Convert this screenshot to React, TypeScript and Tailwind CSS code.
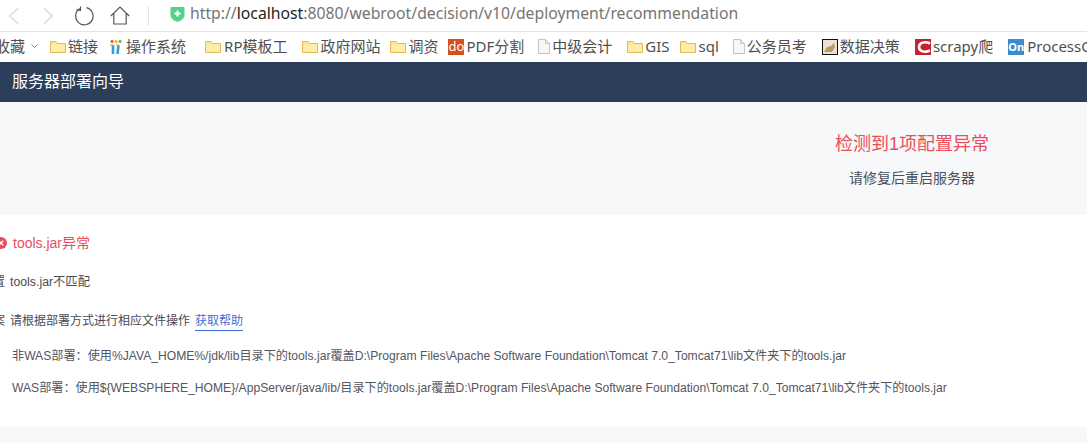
const yahei = '"Noto Sans","Noto Sans CJK SC",sans-serif';
const page = '"Liberation Sans","Noto Sans CJK SC",sans-serif';

function Folder() {
  return (
    <svg width="16" height="14" viewBox="0 0 16 14" className="shrink-0">
      <path d="M0.5 12.5V1.5h5.5l1.5 2h8v9z" fill="#fce693" stroke="#e3bc55" />
      <path d="M1.5 4.5h13v7h-13z" fill="#feeea9" />
    </svg>
  );
}

function FileIcon() {
  return (
    <svg width="14" height="15" viewBox="0 0 14 15" className="shrink-0">
      <path d="M1.5 0.5h7l4 4v10h-11z" fill="#f7f7f7" stroke="#c4c4c4" />
      <path d="M8.5 0.5v4h4" fill="none" stroke="#c4c4c4" />
    </svg>
  );
}

function Tri() {
  return (
    <svg width="14" height="16" viewBox="0 0 14 16" className="shrink-0">
      <path d="M3 1c-2 0-2 3 0 3s2-3 0-3z" fill="#e0483d" />
      <path d="M7 1c-2 0-2 3 0 3s2-3 0-3z" fill="#f5a623" />
      <path d="M11 1c-2 0-2 3 0 3s2-3 0-3z" fill="#4caf50" />
      <path d="M4 6v9M9.500 6l-1 9" stroke="#2f9fd8" strokeWidth="2.600" fill="none" />
      <path d="M1 6h3M7 6h3" stroke="#f0b33a" strokeWidth="1.500" />
    </svg>
  );
}

function Mark({ label, bg, size }: { label: string; bg: string; size: string }) {
  return <span className={`shrink-0 w-4 h-4 flex items-center justify-center leading-none text-white overflow-hidden ${size} ${bg}`}>{label}</span>;
}

function Item({ icon, text, ml, gap }: { icon: React.ReactNode; text: string; ml: string; gap: string }) {
  return (
    <div className={`flex items-center shrink-0 ${ml} ${gap}`}>
      {icon}
      <span className="whitespace-nowrap">{text}</span>
    </div>
  );
}

export default function App() {
  return (
    <div className="w-[1087px] h-[443px] overflow-hidden bg-white flex flex-col" style={{ fontFamily: page }}>
      <div className="h-[32px] shrink-0 bg-white border-b border-[#e3e3e3] flex items-center">
        <svg width="13" height="18" viewBox="0 0 13 18" className="ml-[7px]" fill="none" stroke="#d6d6d6" strokeWidth="1.300">
          <path d="M11 1.500L2.500 9l8.500 7.500" />
        </svg>
        <svg width="13" height="18" viewBox="0 0 13 18" className="ml-[22px]" fill="none" stroke="#d6d6d6" strokeWidth="1.300">
          <path d="M2 1.500L10.500 9 2 16.500" />
        </svg>
        <svg width="20" height="20" viewBox="0 0 20 20" className="ml-[19px]" fill="none" stroke="#555" strokeWidth="1.200">
          <path d="M6 2.600A8.700 8.700 0 1 0 12.500 1.700" />
          <path d="M6.500 0.500L6.500 4.500 2.500 3.500" />
        </svg>
        <svg width="20" height="19" viewBox="0 0 20 19" className="ml-[16px]" fill="none" stroke="#555" strokeWidth="1.200">
          <path d="M0.800 10L10 1l9.200 9M3.800 8v10h12.400V8" />
        </svg>
        <div className="ml-[18px] w-px h-[20px] bg-[#e4e4e4]" />
        <svg width="15" height="16" viewBox="0 0 15 16" className="ml-[21px] -mt-[4px]">
          <path d="M1 1.500h13v8c0 3-3.500 5-6.500 6-3-1-6.500-3-6.500-6z" fill="#55d28a" stroke="#55d28a" strokeLinejoin="round" />
          <path d="M7.500 4.500v6M4.500 7.500h6" stroke="#fff" strokeWidth="2" />
        </svg>
        <div className="ml-[5px] text-[15.750px] text-[#757575] whitespace-nowrap -mt-[3px]" style={{ fontFamily: yahei }}>
          http://<span className="text-[#222]">localhost</span>:8080/webroot/decision/v10/deployment/recommendation
        </div>
      </div>
      <div className="h-[30px] shrink-0 bg-white flex items-center pb-[1px] text-[15px] text-[#505050] overflow-hidden" style={{ fontFamily: yahei }}>
        <span className="-ml-[5px] whitespace-nowrap">收藏</span>
        <svg width="7" height="5" viewBox="0 0 7 5" className="ml-[6px] shrink-0" fill="none" stroke="#888">
          <path d="M0.500 0.500L3.500 3.500 6.500 0.500" />
        </svg>
        <Item icon={<Folder />} text="链接" ml="ml-[12px]" gap="gap-[2px]" />
        <Item icon={<Tri />} text="操作系统" ml="ml-[11px]" gap="gap-[3px]" />
        <Item icon={<Folder />} text="RP模板工" ml="ml-[19px]" gap="gap-[3px]" />
        <Item icon={<Folder />} text="政府网站" ml="ml-[15px]" gap="gap-[2px]" />
        <Item icon={<Folder />} text="调资" ml="ml-[10px]" gap="gap-[2px]" />
        <Item icon={<Mark label="do" bg="bg-[#d6501c]" size="text-[13px]" />} text="PDF分割" ml="ml-[10px]" gap="gap-[2px]" />
        <Item icon={<FileIcon />} text="中级会计" ml="ml-[13px]" gap="gap-[1px]" />
        <Item icon={<Folder />} text="GIS" ml="ml-[15px]" gap="gap-[2px]" />
        <Item icon={<Folder />} text="sql" ml="ml-[10px]" gap="gap-[3px]" />
        <Item icon={<FileIcon />} text="公务员考" ml="ml-[13px]" gap="gap-[1px]" />
        <Item
          icon={
            <svg width="16" height="16" viewBox="0 0 16 16" className="shrink-0">
              <rect x="0.500" y="0.500" width="15" height="15" fill="#e9e3d3" stroke="#111" />
              <path d="M2 13l3-5 4-1 3-3 1 4-3 5z" fill="#b89a5e" />
            </svg>
          }
          text="数据决策"
          ml="ml-[15px]"
          gap="gap-[2px]"
        />
        <Item
          icon={
            <svg width="16" height="16" viewBox="0 0 16 16" className="shrink-0">
              <rect width="16" height="16" fill="#c8202f" />
              <path d="M15 4.500C10 2 4 3.500 4 8s6 6 11 3.500" fill="none" stroke="#fff" strokeWidth="2.600" />
            </svg>
          }
          text="scrapy爬"
          ml="ml-[15px]"
          gap="gap-[2px]"
        />
        <Item icon={<Mark label="On" bg="bg-[#3b8bd0]" size="text-[11px] font-bold" />} text="ProcessOn" ml="ml-[15px]" gap="gap-[3px]" />
      </div>
      <div className="h-[40px] shrink-0 bg-[#2c3e5a] flex items-center pl-[12px] text-[16px] text-white">服务器部署向导</div>
      <div className="h-[113px] shrink-0 bg-[#f7f8fa] flex flex-col items-center w-[1824px] pt-[29px]">
        <div className="text-[18px] leading-[26px] text-[#eb4d5c]">检测到1项配置异常</div>
        <div className="mt-[11px] text-[14px] leading-[20px] text-[#4a5060]">请修复后重启服务器</div>
      </div>
      <div className="h-[212px] shrink-0 bg-white pt-[20px] flex flex-col">
        <div className="flex items-center h-[16px] text-[14px] text-[#eb4d5c]">
          <svg width="12" height="12" viewBox="0 0 12 12" className="-ml-[5px] mr-[6px] -mt-[1px] shrink-0">
            <circle cx="6" cy="6" r="6" fill="#eb4d5c" />
            <path d="M3.800 3.800l4.400 4.400M8.200 3.800L3.800 8.200" stroke="#fff" strokeWidth="1.400" />
          </svg>
          tools.jar异常
        </div>
        <div className="mt-[23px] flex items-center h-[16px] text-[12.300px] text-[#4a4a55] whitespace-nowrap">
          <span className="-ml-[7px] mr-[5px] text-[12px]">置</span>
          tools.jar不匹配
        </div>
        <div className="mt-[22px] flex items-center h-[18px] text-[12px] text-[#4a4a55] whitespace-nowrap">
          <span className="-ml-[7px] mr-[5px]">案</span>
          请根据部署方式进行相应文件操作
          <a className="ml-[5px] text-[#3e6fd8] border-b border-[#3e6fd8]">获取帮助</a>
        </div>
        <div className="mt-[19px] pl-[12px] h-[14px] flex items-center text-[12.130px] text-[#555560] whitespace-nowrap">
          非WAS部署：使用%JAVA_HOME%/jdk/lib目录下的tools.jar覆盖D:\Program Files\Apache Software Foundation\Tomcat 7.0_Tomcat71\lib文件夹下的tools.jar
        </div>
        <div className="mt-[18px] pl-[12px] h-[14px] flex items-center text-[12.130px] text-[#555560] whitespace-nowrap">
          WAS部署：使用$&#123;WEBSPHERE_HOME&#125;/AppServer/java/lib/目录下的tools.jar覆盖D:\Program Files\Apache Software Foundation\Tomcat 7.0_Tomcat71\lib文件夹下的tools.jar
        </div>
      </div>
      <div className="flex-1 bg-[#f7f8fa]" />
    </div>
  );
}
